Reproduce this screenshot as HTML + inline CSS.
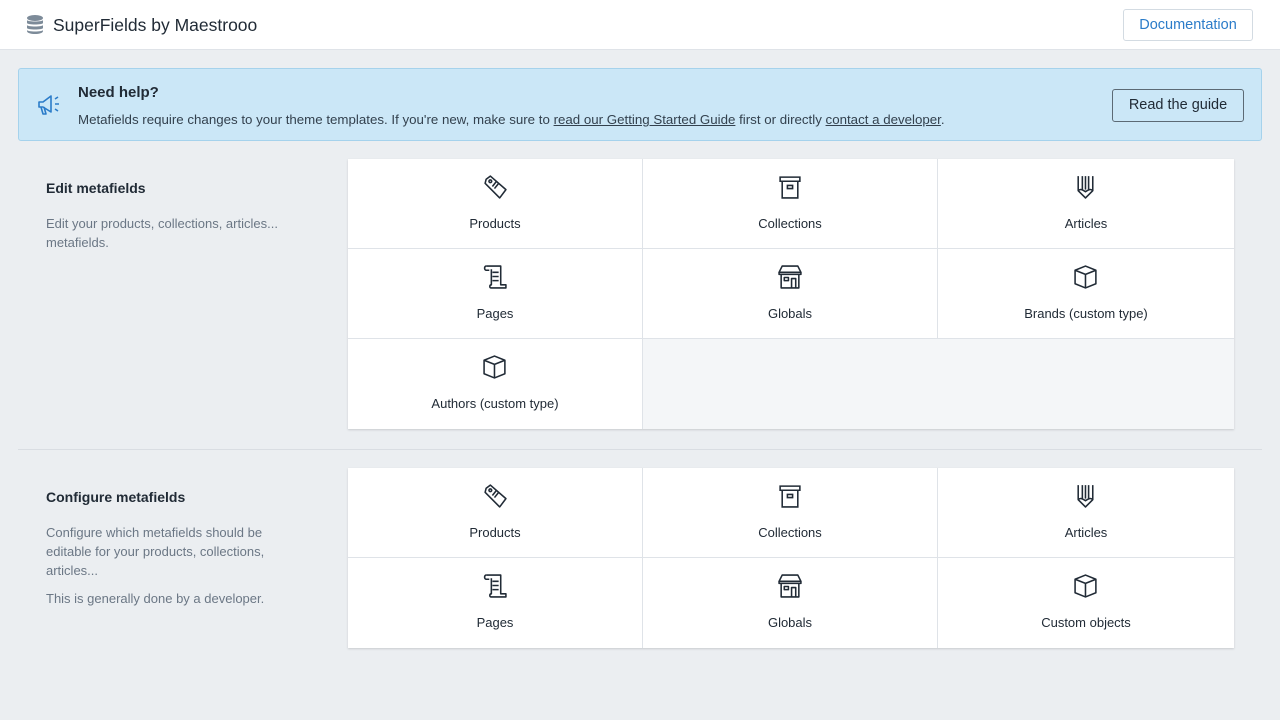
<!DOCTYPE html>
<html><head><meta charset="utf-8"><style>
*{box-sizing:border-box;margin:0;padding:0}
body{width:1280px;height:720px;background:#ebeef1;font-family:"Liberation Sans",sans-serif;color:#212b36;position:relative;overflow:hidden}
.hdr{position:absolute;left:0;top:0;width:1280px;height:50px;background:#fff;border-bottom:1px solid #dfe3e8}
.hdr .t{position:absolute;left:53px;top:15px;font-size:17.5px;color:#212b36}
.doc{position:absolute;left:1123px;top:9px;width:130px;height:32px;border:1px solid #d3dbe2;border-radius:3px;color:#2b7cc9;font-size:14.5px;text-align:center;line-height:30px}
.ban{position:absolute;left:18px;top:68px;width:1244px;height:73px;background:#cbe7f7;border:1px solid #a5d2ec;border-radius:3px}
.ban h3{position:absolute;left:59px;top:15px;font-size:15px;font-weight:bold}
.ban p{position:absolute;left:59px;top:43px;font-size:13.3px;color:#33414e}
.ban p u{text-decoration:underline}
.rg{position:absolute;left:1093px;top:20px;width:132px;height:33px;border:1px solid #5c6a75;border-radius:3px;font-size:14.5px;text-align:center;line-height:31px}
.sec h2{position:absolute;left:46px;font-size:14px;font-weight:bold}
.desc{position:absolute;left:46px;font-size:13px;color:#6b7785;line-height:19px;width:250px}
.grid{position:absolute;left:348px;width:886px;background:#f4f6f8;box-shadow:0 1px 2px rgba(63,63,68,.2);display:grid;grid-template-columns:295px 295px 296px}
.c{height:90px;background:#fff;border-right:1px solid #dfe3e8;border-bottom:1px solid #dfe3e8;position:relative;text-align:center}
.c svg{position:absolute;left:50%;top:15px;margin-left:-13px}
.c span{position:absolute;left:0;right:0;top:57px;font-size:13px;color:#212b36}
.hr{position:absolute;left:18px;top:449px;width:1244px;border-top:1px solid #d9dde2}
</style></head><body>
<div class="hdr">
<svg style="position:absolute;left:27px;top:15px" width="16" height="19" viewBox="0 0 16 19"><ellipse cx="8" cy="3" rx="8" ry="3" fill="#7d8b99"/><path d="M0 5c0 2 16 2 16 0v3c0 2-16 2-16 0zM0 10c0 2 16 2 16 0v3c0 2-16 2-16 0zM0 15c0 2 16 2 16 0v1c0 4-16 4-16 0z" fill="#7d8b99"/></svg>
<div class="t">SuperFields by Maestrooo</div>
<div class="doc">Documentation</div>
</div>
<div class="ban">
<svg style="position:absolute;left:17px;top:24px" width="26" height="24" viewBox="0 0 26 24" fill="none" stroke="#2b7cc9" stroke-width="1.6" stroke-linejoin="round"><path d="M3 9h4l8-6v16l-8-5H3z"/><path d="M5 14l2 7h3l-2-7"/><path d="M19 6l3-2M19 11h4M19 16l3 2"/></svg>
<h3>Need help?</h3>
<p>Metafields require changes to your theme templates. If you're new, make sure to <u>read our Getting Started Guide</u> first or directly <u>contact a developer</u>.</p>
<div class="rg">Read the guide</div>
</div>

<div class="sec"><h2 style="top:180px">Edit metafields</h2>
<div class="desc" style="top:214px">Edit your products, collections, articles... metafields.</div></div>

<svg width="0" height="0" style="position:absolute"><defs>
<g id="tag" fill="none" stroke="#212b36" stroke-width="1.5" stroke-linejoin="round"><path d="M4 5l4-3 15 13-6 8L3 9z"/><circle cx="8" cy="7" r="1.3"/><path d="M10 12l4-5M12 14l4-5"/></g>
<g id="box" fill="none" stroke="#212b36" stroke-width="1.5"><path d="M3 3h19v4H3zM5 7v16h15V7"/><path d="M10 11h5v3h-5z"/></g>
<g id="pen" fill="none" stroke="#212b36" stroke-width="1.5" stroke-linejoin="round"><path d="M5 2v14l7 7 7-7V2"/><path d="M9 2v13M12 2v13M15 2v13"/><path d="M5 16c2-2 4-1 7 1 3-2 5-3 7-1"/></g>
<g id="scroll" fill="none" stroke="#212b36" stroke-width="1.5" stroke-linejoin="round"><path d="M4 2h14v18h5v3H9c-2 0-2-3 0-3h0V5"/><path d="M4 2c-2 0-2 4 0 4h3"/><path d="M10 8h6M10 12h6M10 16h6"/></g>
<g id="store" fill="none" stroke="#212b36" stroke-width="1.5" stroke-linejoin="round"><path d="M5 2h15l3 6H2z"/><path d="M2 8v2h21V8M4 10v13h17V10"/><path d="M7 13h4v3H7zM14 23v-9h4v9"/></g>
<g id="cube" fill="none" stroke="#212b36" stroke-width="1.5" stroke-linejoin="round"><path d="M12 2l10 4v13l-10 4-10-4V6z"/><path d="M2 6l10 4 10-4M12 10v13"/></g>
</defs></svg>

<div class="grid" style="top:159px">
<div class="c"><svg width="26" height="26" viewBox="0 0 25 25"><use href="#tag"/></svg><span>Products</span></div>
<div class="c"><svg width="26" height="26" viewBox="0 0 25 25"><use href="#box"/></svg><span>Collections</span></div>
<div class="c" style="border-right:0"><svg width="26" height="26" viewBox="0 0 25 25"><use href="#pen"/></svg><span>Articles</span></div>
<div class="c"><svg width="26" height="26" viewBox="0 0 25 25"><use href="#scroll"/></svg><span>Pages</span></div>
<div class="c"><svg width="26" height="26" viewBox="0 0 25 25"><use href="#store"/></svg><span>Globals</span></div>
<div class="c" style="border-right:0"><svg width="26" height="26" viewBox="0 0 25 25"><use href="#cube"/></svg><span>Brands (custom type)</span></div>
<div class="c" style="border-bottom:0"><svg width="26" height="26" viewBox="0 0 25 25"><use href="#cube"/></svg><span>Authors (custom type)</span></div>
</div>

<div class="hr"></div>

<div class="sec"><h2 style="top:489px">Configure metafields</h2>
<div class="desc" style="top:523px">Configure which metafields should be editable for your products, collections, articles...</div>
<div class="desc" style="top:589px">This is generally done by a developer.</div></div>

<div class="grid" style="top:468px">
<div class="c"><svg width="26" height="26" viewBox="0 0 25 25"><use href="#tag"/></svg><span>Products</span></div>
<div class="c"><svg width="26" height="26" viewBox="0 0 25 25"><use href="#box"/></svg><span>Collections</span></div>
<div class="c" style="border-right:0"><svg width="26" height="26" viewBox="0 0 25 25"><use href="#pen"/></svg><span>Articles</span></div>
<div class="c" style="border-bottom:0"><svg width="26" height="26" viewBox="0 0 25 25"><use href="#scroll"/></svg><span>Pages</span></div>
<div class="c" style="border-bottom:0"><svg width="26" height="26" viewBox="0 0 25 25"><use href="#store"/></svg><span>Globals</span></div>
<div class="c" style="border:0"><svg width="26" height="26" viewBox="0 0 25 25"><use href="#cube"/></svg><span>Custom objects</span></div>
</div>
</body></html>
